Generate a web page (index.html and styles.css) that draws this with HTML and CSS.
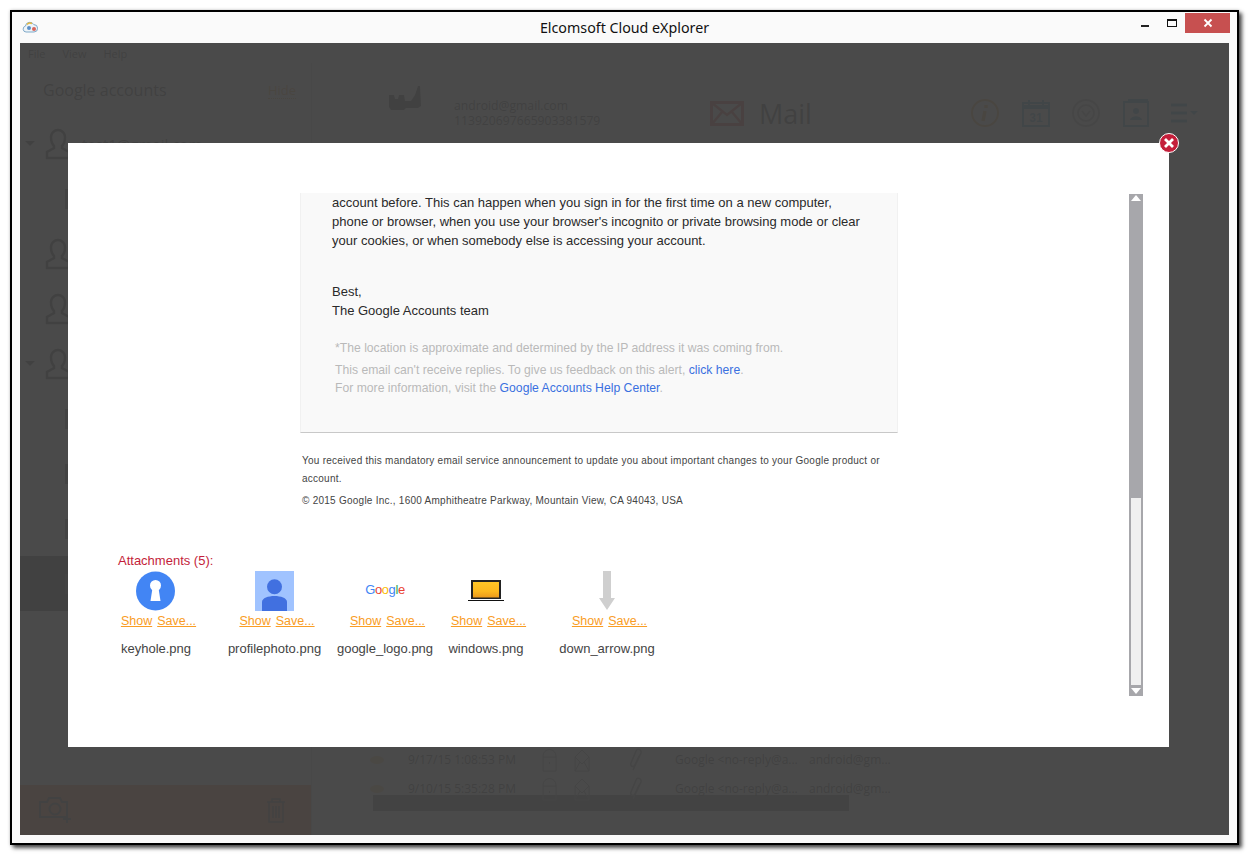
FILE: index.html
```html
<!DOCTYPE html>
<html lang="en">
<head>
<meta charset="utf-8">
<title>Elcomsoft Cloud eXplorer</title>
<link rel="stylesheet" href="styles.css">
</head>
<body>
<div class="window">
  <header class="titlebar">
    <svg class="app-icon" width="16" height="14" viewBox="0 0 16 14"><path d="M4 12a3 3 0 0 1-.6-5.900A4.500 4.500 0 0 1 11.800 4.600 3.700 3.700 0 0 1 12 12z" fill="#eef4f8" stroke="#7fa9c9"/><path d="M5 4.500a4 4 0 0 1 5-1" fill="none" stroke="#e9b93a" stroke-width="1.500"/><circle cx="12" cy="9" r="2" fill="#d9645a"/><circle cx="7" cy="8" r="2" fill="#5b8fc7"/></svg>
    <div class="title">Elcomsoft Cloud eXplorer</div>
    <div class="controls">
      <span class="min"></span>
      <span class="max"></span>
      <span class="close"><svg width="10" height="10" viewBox="0 0 10 10"><path d="M1.500 1.500l7 7M8.500 1.500l-7 7" stroke="#fff" stroke-width="1.800"/></svg></span>
    </div>
  </header>

  <div class="client">
    <div class="app">
      <nav class="menubar"><span>File</span><span>View</span><span>Help</span></nav>
      <div class="panes">
        <aside class="sidebar">
          <div class="side-head"><span class="side-title">Google accounts</span><span class="hide">Hide</span></div>
          <div class="accounts">
            <div class="account"><span class="tri"></span><svg class="avatar" viewBox="0 0 26 32"><path d="M9 20v-2c-2-2-3-5-3-9a7 7 0 0 1 14 0c0 4-1 7-3 9v2l7 4v6H2v-6z" fill="none" stroke="#333" stroke-width="2.500"/></svg><span>test1@gmail.com</span></div>
            <div class="sub"><span class="sub-icon"></span></div>
            <div class="account"><span class="tri none"></span><svg class="avatar" viewBox="0 0 26 32"><path d="M9 20v-2c-2-2-3-5-3-9a7 7 0 0 1 14 0c0 4-1 7-3 9v2l7 4v6H2v-6z" fill="none" stroke="#333" stroke-width="2.500"/></svg></div>
            <div class="account"><span class="tri none"></span><svg class="avatar" viewBox="0 0 26 32"><path d="M9 20v-2c-2-2-3-5-3-9a7 7 0 0 1 14 0c0 4-1 7-3 9v2l7 4v6H2v-6z" fill="none" stroke="#333" stroke-width="2.500"/></svg></div>
            <div class="account"><span class="tri"></span><svg class="avatar" viewBox="0 0 26 32"><path d="M9 20v-2c-2-2-3-5-3-9a7 7 0 0 1 14 0c0 4-1 7-3 9v2l7 4v6H2v-6z" fill="none" stroke="#333" stroke-width="2.500"/></svg></div>
            <div class="sub"><span class="sub-icon"></span></div>
            <div class="sub"><span class="sub-icon"></span></div>
            <div class="sub"><span class="sub-icon"></span></div>
            <div class="sub selected"><span class="sub-icon"></span></div>
          </div>
          <div class="side-foot">
            <svg width="33" height="26" viewBox="0 0 33 26"><path d="M1 5h7l2-4h11l2 4h5v15H1z" fill="none" stroke="#444" stroke-width="2"/><circle cx="16" cy="12" r="5.500" fill="none" stroke="#444" stroke-width="2"/><path d="M28 18v8M24 22h8" stroke="#444" stroke-width="2"/></svg>
            <svg width="20" height="25" viewBox="0 0 20 25"><path d="M1 4h18M6 4V1h8v3M3 4v20h14V4M7 8v12M10 8v12M13 8v12" fill="none" stroke="#444" stroke-width="1.500"/></svg>
          </div>
        </aside>
        <main class="main">
          <div class="main-head">
            <svg class="bg-pic" width="34" height="26" viewBox="0 0 34 26"><path d="M1 10h5l1 4h3l1-4h5l1 6h6l4-6 3-9h2l1 20-3 2H18l-2 2H3l-2-3z" fill="#333"/></svg>
            <div class="acct-id"><div>android@gmail.com</div><div>113920697665903381579</div></div>
            <div class="mail-title">
              <svg width="34" height="25" viewBox="0 0 34 25"><rect x="1.500" y="1.500" width="31" height="22" fill="none" stroke="#e03c28" stroke-width="3"/><path d="M2 2l15 12L32 2M2 23l10-12M32 23L22 11" fill="none" stroke="#e03c28" stroke-width="2.500"/></svg>
              <span>Mail</span>
            </div>
            <div class="tools">
              <svg width="28" height="28" viewBox="0 0 28 28"><circle cx="14" cy="14" r="13" fill="none" stroke="#f0a030" stroke-width="2"/><path d="M15 6v3M14 12l-2 10" stroke="#f0a030" stroke-width="3.500"/></svg>
              <svg width="28" height="28" viewBox="0 0 28 28"><path d="M1 4h26v23H1z" fill="none" stroke="#3c9ad0" stroke-width="2"/><path d="M1 8h26" stroke="#3c9ad0" stroke-width="4"/><path d="M7 1v5M21 1v5" stroke="#3c9ad0" stroke-width="2"/><text x="14" y="23" font-size="12" font-family="Liberation Sans" font-weight="700" text-anchor="middle" fill="#3c9ad0">31</text></svg>
              <svg width="28" height="28" viewBox="0 0 28 28"><circle cx="14" cy="14" r="13" fill="none" stroke="#aaa" stroke-width="2"/><circle cx="14" cy="14" r="8" fill="none" stroke="#aaa" stroke-width="2"/><path d="M10 12l4 5 4-5" fill="none" stroke="#aaa" stroke-width="2"/></svg>
              <svg width="26" height="28" viewBox="0 0 26 28"><path d="M1 3h24v24H1zM5 1h20" fill="none" stroke="#3c9ad0" stroke-width="2"/><circle cx="13" cy="12" r="3" fill="#3c9ad0"/><path d="M7 21c1-5 11-5 12 0z" fill="#3c9ad0"/></svg>
              <svg width="27" height="20" viewBox="0 0 27 20"><path d="M0 2h16M0 10h16M0 18h16" stroke="#3c9ad0" stroke-width="3"/><path d="M19 8h8l-4 4z" fill="#3c9ad0"/></svg>
            </div>
          </div>
          <div class="list">
            <div class="list-row"><span class="eye"></span><span class="date">9/17/15 1:08:53 PM</span>
              <svg class="r-lock" width="15" height="24" viewBox="0 0 15 24"><path d="M1 8a6.500 6.500 0 0 1 13 0v15H1zM1 9h13M7.500 14v2" fill="none" stroke="#888"/></svg>
              <svg class="r-env" width="16" height="24" viewBox="0 0 16 24"><path d="M1 9l7-7 7 7v14H1zM1 9l7 7 7-7M1 23l5-9M15 23l-5-9" fill="none" stroke="#888"/></svg>
              <svg class="r-clip" width="14" height="24" viewBox="0 0 14 24"><path d="M4 22L12 5c1-4-4-5-5-2L2 15c-1 3 2 5 4 2l4-9" fill="none" stroke="#888" stroke-width="1.500"/></svg>
              <span class="from">Google &lt;no-reply@a...</span><span>android@gm...</span></div>
            <div class="list-row"><span class="eye"></span><span class="date">9/10/15 5:35:28 PM</span>
              <svg class="r-lock" width="15" height="24" viewBox="0 0 15 24"><path d="M1 8a6.500 6.500 0 0 1 13 0v15H1zM1 9h13M7.500 14v2" fill="none" stroke="#888"/></svg>
              <svg class="r-env" width="16" height="24" viewBox="0 0 16 24"><path d="M1 9l7-7 7 7v14H1zM1 9l7 7 7-7M1 23l5-9M15 23l-5-9" fill="none" stroke="#888"/></svg>
              <svg class="r-clip" width="14" height="24" viewBox="0 0 14 24"><path d="M4 22L12 5c1-4-4-5-5-2L2 15c-1 3 2 5 4 2l4-9" fill="none" stroke="#888" stroke-width="1.500"/></svg>
              <span class="from">Google &lt;no-reply@a...</span><span>android@gm...</span></div>
            <div class="hscroll"></div>
          </div>
        </main>
      </div>
    </div>

    <div class="scrim"></div>

    <section class="modal">
      <div class="modal-body">
        <div class="mail-view">
          <div class="email">
            <div class="card">
              <p class="copy">account before. This can happen when you sign in for the first time on a new computer,<br>phone or browser, when you use your browser's incognito or private browsing mode or clear<br>your cookies, or when somebody else is accessing your account.</p>
              <p class="copy sign">Best,<br>The Google Accounts team</p>
              <p class="fine note">*The location is approximate and determined by the IP address it was coming from.</p>
              <p class="fine">This email can't receive replies. To give us feedback on this alert, <a href="#">click here</a>.<br>For more information, visit the <a href="#">Google Accounts Help Center</a>.</p>
            </div>
            <p class="legal">You received this mandatory email service announcement to update you about important changes to your Google product or account.</p>
            <p class="legal addr">© 2015 Google Inc., 1600 Amphitheatre Parkway, Mountain View, CA 94043, USA</p>
          </div>
          <div class="attachments">
            <div class="att-title">Attachments (5):</div>
            <div class="att-list">
              <figure class="att w1">
                <svg class="thumb" width="40" height="40" viewBox="0 0 40 40"><circle cx="19.500" cy="20" r="19.500" fill="#4285f4"/><circle cx="19.500" cy="14.500" r="5.500" fill="#fff"/><path d="M16.500 17h6l2 13h-10z" fill="#fff"/></svg>
                <div class="links"><a href="#">Show</a><a href="#">Save...</a></div>
                <figcaption>keyhole.png</figcaption>
              </figure>
              <figure class="att w2">
                <svg class="thumb" width="39" height="40" viewBox="0 0 39 40"><rect width="39" height="40" fill="#a0c3ff"/><circle cx="19.500" cy="15.700" r="7.500" fill="#4170e0"/><path d="M7 40V31c0-8 25-8 25 0v9z" fill="#4170e0"/></svg>
                <div class="links"><a href="#">Show</a><a href="#">Save...</a></div>
                <figcaption>profilephoto.png</figcaption>
              </figure>
              <figure class="att w3">
                <div class="thumb google-logo"><b class="g-b">G</b><b class="g-r">o</b><b class="g-y">o</b><b class="g-b">g</b><b class="g-g">l</b><b class="g-r">e</b></div>
                <div class="links"><a href="#">Show</a><a href="#">Save...</a></div>
                <figcaption>google_logo.png</figcaption>
              </figure>
              <figure class="att w4">
                <svg class="thumb" width="36" height="40" viewBox="0 0 36 40"><defs><linearGradient id="scr" x1="0" y1="0" x2="0" y2="1"><stop offset="0" stop-color="#ffc526"/><stop offset=".6" stop-color="#fdb81e"/><stop offset="1" stop-color="#ec9a1c"/></linearGradient></defs><rect x="3" y="9" width="30" height="19" fill="#222"/><rect x="5" y="11" width="26" height="15.500" fill="url(#scr)"/><rect y="29" width="36" height="1" fill="#111"/></svg>
                <div class="links"><a href="#">Show</a><a href="#">Save...</a></div>
                <figcaption>windows.png</figcaption>
              </figure>
              <figure class="att w5">
                <svg class="thumb" width="16" height="40" viewBox="0 0 16 40"><path d="M4 0h8v27h4l-8 12-8-12h4z" fill="#cfcfcf"/></svg>
                <div class="links"><a href="#">Show</a><a href="#">Save...</a></div>
                <figcaption>down_arrow.png</figcaption>
              </figure>
            </div>
          </div>
        </div>
        <div class="vscroll">
          <span class="arrow up"></span>
          <div class="thumbbar"></div>
          <div class="track"></div>
          <span class="arrow down"></span>
        </div>
      </div>
      <button class="modal-close" aria-label="Close"><svg width="20" height="20" viewBox="0 0 20 20"><circle cx="10" cy="10" r="9.500" fill="#c41e3a" stroke="#fff"/><path d="M6 6l8 8M14 6l-8 8" stroke="#fff" stroke-width="2.800"/></svg></button>
    </section>
  </div>
</div>
</body>
</html>
```
FILE: styles.css
```css
* { box-sizing: border-box; }
html, body { margin: 0; height: 100%; background: #fff; overflow: hidden; }
body { padding: 10px 10px 11px 10px; font-family: "Liberation Sans", Arial, sans-serif; }
.window {
  height: 835px; width: 1229px;
  display: flex; flex-direction: column;
  background: #fafafa;
  border: 2px solid #000;
  box-shadow: 3px 3px 4px rgba(0,0,0,.7), 0 0 3px rgba(0,0,0,.2);
  padding: 0 8px 8px;
}
.titlebar { height: 30px; display: grid; grid-template-columns: 1fr auto 1fr; align-items: center; flex: none; }
.app-icon { margin-left: 2px; }
.title { font: 14.25px "Noto Sans", "Open Sans", sans-serif; color: #111; }
.controls { display: flex; align-items: flex-start; height: 30px; justify-self: end; }
.min { width: 8px; height: 2px; background: #222; margin: 13px 0 0; }
.max { width: 10px; height: 8px; border: 1px solid #111; border-top-width: 2px; margin: 7px 0 0 18px; }
.close { width: 45px; height: 20px; margin: 1px -1px 0 8px; background: #c75050; display: flex; align-items: center; justify-content: center; }

.client { flex: 1; position: relative; margin-top: 1px; overflow: hidden; background: #fff; min-height: 0; }
.app { height: 100%; display: flex; flex-direction: column; color: #333; font-family: "Open Sans", sans-serif; opacity: .15; }
.menubar { display: flex; gap: 17px; padding: 3px 0 0 8px; font-size: 11px; height: 20px; flex: none; }
.panes { flex: 1; display: flex; min-height: 0; }
.sidebar { width: 292px; border-right: 1px solid #ddd; display: flex; flex-direction: column; flex: none; }
.side-head { display: flex; justify-content: space-between; padding: 16px 15px 0 23px; height: 53px; }
.side-title { font-size: 16px; }
.hide { font-size: 13px; color: #f0a030; border-bottom: 1px dotted #f0a030; height: 18px; margin-top: 2px; }
.accounts { flex: 1; }
.account { display: flex; align-items: center; height: 55px; font-size: 15px; }
.tri { width: 0; height: 0; border: 5px solid transparent; border-top: 5px solid #333; margin: 5px 10px 0 5px; flex: none; }
.tri.none { visibility: hidden; }
.avatar { width: 26px; height: 32px; margin-right: 11px; flex: none; }
.sub { height: 55px; display: flex; align-items: center; padding-left: 45px; }
.sub-icon { width: 24px; height: 20px; background: #555; }
.sub.selected { background: #303030; }
.side-foot { height: 50px; background: #ff7330; display: flex; justify-content: space-between; align-items: center; padding: 0 25px 0 19px; flex: none; }

.main { flex: 1; display: flex; flex-direction: column; min-width: 0; }
.main-head { height: 100px; display: flex; align-items: center; padding: 0 31px 0 76px; flex: none; }
.bg-pic { align-self: flex-start; margin-top: 22px; flex: none; }
.acct-id { margin-left: 32px; font-size: 12.2px; line-height: 15px; width: 256px; }
.mail-title { display: flex; align-items: center; gap: 15px; font-size: 27px; }
.tools { margin-left: auto; display: flex; align-items: center; gap: 22.5px; }
.list { margin-top: auto; padding: 0 0 24px 58px; font-size: 12px; }
.list-row { height: 29px; display: flex; align-items: center; }
.eye { width: 14px; height: 8px; background: #f8c878; border-radius: 50%; margin-right: 24px; flex: none; }
.date { width: 134px; flex: none; }
.r-env { margin-left: 17px; }
.r-clip { margin-left: 39px; }
.from { width: 134px; margin-left: 32px; flex: none; }
.hscroll { width: 476px; height: 16px; background: #5a5a5a; margin: -8px 0 0 3px; }

.scrim { position: absolute; inset: 0; background: rgba(0,0,0,.71); }

.modal { position: absolute; left: 48px; top: 100px; width: 1101px; height: 604px; background: #fff; }
.modal-close { position: absolute; right: -10px; top: -10px; width: 20px; height: 20px; padding: 0; border: 0; background: none; display: block; }
.modal-close svg { display: block; }
.modal-body { height: 100%; display: flex; padding: 50px 26px 51px 0; }
.mail-view { flex: 1; min-width: 0; }
.email { width: 598px; margin-left: 232px; }
.card { background: #f9f9f9; height: 240px; border-left: 1px solid #f1f1f1; border-right: 1px solid #f1f1f1; border-bottom: 1px solid #c8c8c8; padding: 0 31px; color: #2a2a2a; overflow: hidden; }
.card p { margin: 0; }
.copy { font-size: 13px; line-height: 19px; white-space: nowrap; }
.card .sign { margin-top: 32px; }
.fine { font-size: 12.2px; line-height: 18px; color: #b9b9b9; padding-left: 3px; white-space: nowrap; }
.card .note { margin: 19px 0 4px; }
.fine a { color: #3a70e0; text-decoration: none; }
.legal { font-size: 10px; line-height: 18px; color: #444; margin: 19px 0 0; padding: 0 14px 0 2px; letter-spacing: .25px; }
.legal.addr { margin-top: 4px; }

.attachments { margin: 43px 0 0 50px; font-size: 13px; }
.att-title { color: #c41e3a; font-size: 13px; line-height: 16px; }
.att-list { display: flex; margin-top: 2px; }
.att { margin: 0; display: flex; flex-direction: column; align-items: center; text-align: center; color: #444; flex: none; }
.thumb { height: 40px; display: block; flex: none; }
.links { display: flex; gap: 5px; margin-top: 3px; padding-left: 5px; line-height: 15px; font-size: 12.5px; }
.links a { color: #f99d25; }
figcaption { margin-top: 12px; line-height: 15px; white-space: nowrap; }
.w1 { width: 76px; }
.w2 { width: 111px; margin-left: 25px; }
.w3 { width: 110px; }
.w4 { width: 92px; }
.w5 { width: 120px; margin-left: 15px; }
.google-logo { font: 400 13px/38px "Liberation Sans", sans-serif; letter-spacing: -.4px; }
.google-logo b { font-weight: 400; }
.g-b { color: #4285f4; } .g-r { color: #ea4335; } .g-y { color: #fbbc05; } .g-g { color: #34a853; }

.vscroll { width: 14px; margin-top: 1px; display: flex; flex-direction: column; background: #a7a7ab; position: relative; flex: none; }
.thumbbar { height: 304px; flex: none; }
.track { flex: 1; background: #f0f0f0; margin: 0 2px 11px; }
.arrow { position: absolute; left: 2px; width: 0; height: 0; border: 5px solid transparent; }
.arrow.up { top: 1px; border-bottom: 6px solid #fff; border-top: 0; }
.arrow.down { bottom: 2px; border-top: 6px solid #fff; border-bottom: 0; }
```
